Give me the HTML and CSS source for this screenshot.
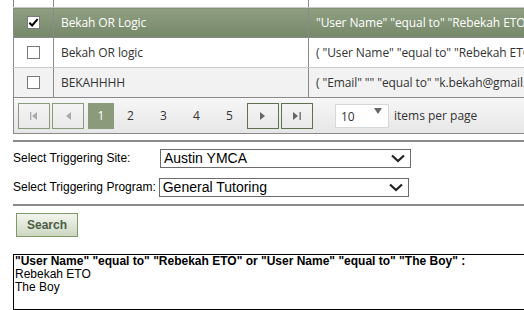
FILE: index.html
```html
<!DOCTYPE html>
<html>
<head>
<meta charset="utf-8">
<link rel="stylesheet" href="styles.css">
</head>
<body>
<div class="page">
  <div class="grid">
    <table class="gtable">
      <colgroup><col class="c-check"><col class="c-name"><col class="c-cond"></colgroup>
      <tr class="row-top"><td></td><td></td><td></td></tr>
      <tr class="row sel">
        <td class="ck"><span class="box checked"><svg viewBox="0 0 12 12" width="11" height="11"><path d="M1.5 6.2 L4.5 9.3 L10.5 2.3" fill="none" stroke="#000" stroke-width="2.2"/></svg></span></td>
        <td>Bekah OR Logic</td>
        <td>"User Name" "equal to" "Rebekah ETO" or "User Name" "equal to" "The Boy"</td>
      </tr>
      <tr class="row">
        <td class="ck"><span class="box"></span></td>
        <td>Bekah OR logic</td>
        <td>( "User Name" "equal to" "Rebekah ETO" or "User Name" "equal to" "The Boy" )</td>
      </tr>
      <tr class="row alt">
        <td class="ck"><span class="box"></span></td>
        <td>BEKAHHHH</td>
        <td>( "Email" "" "equal to" "k.bekah@gmail.com" )</td>
      </tr>
    </table>
    <div class="pager">
      <span class="pbtn nav"><svg width="8" height="8" viewBox="0 0 8 8"><rect x="0" y="0" width="1.3" height="8" fill="#aaa"/><path d="M7 0 L2 4 L7 8Z" fill="#aaa"/></svg></span>
      <span class="pbtn nav"><svg width="6" height="8" viewBox="0 0 6 8"><path d="M6 0 L1 4 L6 8Z" fill="#aaa"/></svg></span>
      <span class="pnum cur">1</span>
      <span class="pnum">2</span>
      <span class="pnum">3</span>
      <span class="pnum">4</span>
      <span class="pnum">5</span>
      <span class="pbtn nav act"><svg width="6" height="8" viewBox="0 0 6 8"><path d="M0 0 L5 4 L0 8Z" fill="#666"/></svg></span>
      <span class="pbtn nav act"><svg width="8" height="8" viewBox="0 0 8 8"><path d="M0 0 L5 4 L0 8Z" fill="#666"/><rect x="6.5" y="0" width="1.3" height="8" fill="#666"/></svg></span>
      <span class="psize"><span class="psval">10</span><svg width="8" height="6" viewBox="0 0 8 6"><path d="M0 0 L8 0 L4 6Z" fill="#666"/></svg></span>
      <span class="plabel">items per page</span>
    </div>
  </div>
  <div class="rule"></div>
  <div class="form">
    <div class="frow">
      <label class="flabel l1">Select Triggering Site:</label>
      <span class="sel-box s1"><span>Austin YMCA</span><svg width="14" height="9" viewBox="0 0 14 9"><path d="M1 1.5 L7 7 L13 1.5" fill="none" stroke="#222" stroke-width="2.2"/></svg></span>
    </div>
    <div class="frow">
      <label class="flabel">Select Triggering Program:</label>
      <span class="sel-box s2"><span>General Tutoring</span><svg width="14" height="9" viewBox="0 0 14 9"><path d="M1 1.5 L7 7 L13 1.5" fill="none" stroke="#222" stroke-width="2.2"/></svg></span>
    </div>
  </div>
  <div class="rule r2"></div>
  <button class="search">Search</button>
  <div class="result">
    <div class="rhead">"User Name" "equal to" "Rebekah ETO" or "User Name" "equal to" "The Boy" :</div>
    <div>Rebekah ETO</div>
    <div>The Boy</div>
  </div>
</div>
</body>
</html>
```
FILE: styles.css
```css
html, body { margin: 0; padding: 0; background: #fff; }
body { overflow: hidden; width: 524px; height: 310px; }
.page { padding-left: 13px; width: 640px; }
.grid { width: 620px; }
.gtable {
  border-collapse: collapse;
  width: 620px;
  table-layout: fixed;
  font-family: "Open Sans", "Noto Sans", sans-serif;
  font-size: 12px;
  letter-spacing: -0.1px;
  color: #333;
  border-left: 1px solid #8a8a8a;
}
.c-check { width: 40px; }
.c-name { width: 255px; }
.gtable td {
  border-right: 1px solid #8a8a8a;
  border-bottom: 1px solid #c8c8c8;
  padding: 0 0 0 7px;
  white-space: nowrap;
  overflow: hidden;
}
.row-top td { height: 7px; padding: 0; border-bottom: 1px solid #c8c8c8; }
.row td { height: 29px; }
.row.sel td {
  background: linear-gradient(#909f81, #76886a);
  color: #fff;
  border-bottom-color: #8a8a8a;
}
.row.alt td { background: #f2f2f2; border-bottom: 1px solid #8a8a8a; }
.gtable td.ck { padding: 0; text-align: center; }
.box {
  display: inline-block;
  width: 11px; height: 11px;
  border: 1px solid #7a7a7a;
  background: #fff;
  vertical-align: middle;
  position: relative;
  top: -1px;
}
.box svg { display: block; }
.pager {
  display: flex;
  align-items: center;
  height: 36px;
  border-left: 1px solid #8a8a8a;
  border-bottom: 1px solid #8a8a8a;
  background: linear-gradient(#f7f7f7, #e6e6e6);
  padding-left: 4px;
  font-family: "Open Sans", "Noto Sans", sans-serif;
  font-size: 12px;
  color: #333;
  box-sizing: border-box;
}
.pbtn {
  display: flex; align-items: center; justify-content: center;
  width: 30px; height: 24px;
  border: 1px solid #8a9a7a;
  margin-right: 2px;
}
.pbtn.act { border-color: #5f704f; }
.pnum {
  display: flex; align-items: center; justify-content: center;
  width: 33px; height: 26px;
}
.pnum.cur { width: 26px; background: #8a9a7b; color: #fff; margin-left: 2px; }
.pnum + .pbtn { margin-left: 1px; }
.psize {
  display: flex; align-items: center; justify-content: space-between;
  width: 54px; height: 24px;
  margin-left: 20px;
  background: #fff;
  border: 1px solid #d8d8d8;
  padding: 0 6px 0 5px;
  box-sizing: border-box;
}
.psize svg { position: relative; top: -5px; }
.psval { position: relative; top: 1px; }
.plabel { margin-left: 5px; }
.rule { height: 0; border-top: 2px solid #8a8a8a; width: 540px; margin-top: 6px; }
.form { font-family: "Liberation Sans", Arial, sans-serif; font-size: 12px; color: #000; padding-top: 6px; }
.frow { display: flex; align-items: center; height: 20px; margin-bottom: 9px; }
.flabel { display: inline-block; }
.l1 { width: 147px; }
.flabel:not(.l1) { margin-right: 3px; }
.sel-box {
  display: flex; align-items: center; justify-content: space-between;
  height: 19px;
  border: 1px solid #6c6c6c;
  box-sizing: border-box;
  padding: 0 5px 0 3px;
  font-size: 14px;
}
.s1 { width: 251px; }
.s2 { width: 250px; }
.r2 { margin-top: -2px; }
.search {
  display: block;
  margin: 7px 0 0 3px;
  width: 62px; height: 24px;
  border: 1px solid #7f9a67;
  background: linear-gradient(#f2f5ee, #cdd7c2);
  font-family: "Liberation Sans", Arial, sans-serif;
  font-weight: bold;
  font-size: 12px;
  color: #4d5d45;
  padding: 0;
}
.result {
  margin-top: 17px;
  border: 1px solid #000;
  height: 56px;
  box-sizing: border-box;
  width: 560px;
  font-family: "Liberation Sans", Arial, sans-serif;
  font-size: 12px;
  line-height: 13px;
  padding-left: 1px;
  color: #000;
}
.rhead { font-weight: bold; }
```
